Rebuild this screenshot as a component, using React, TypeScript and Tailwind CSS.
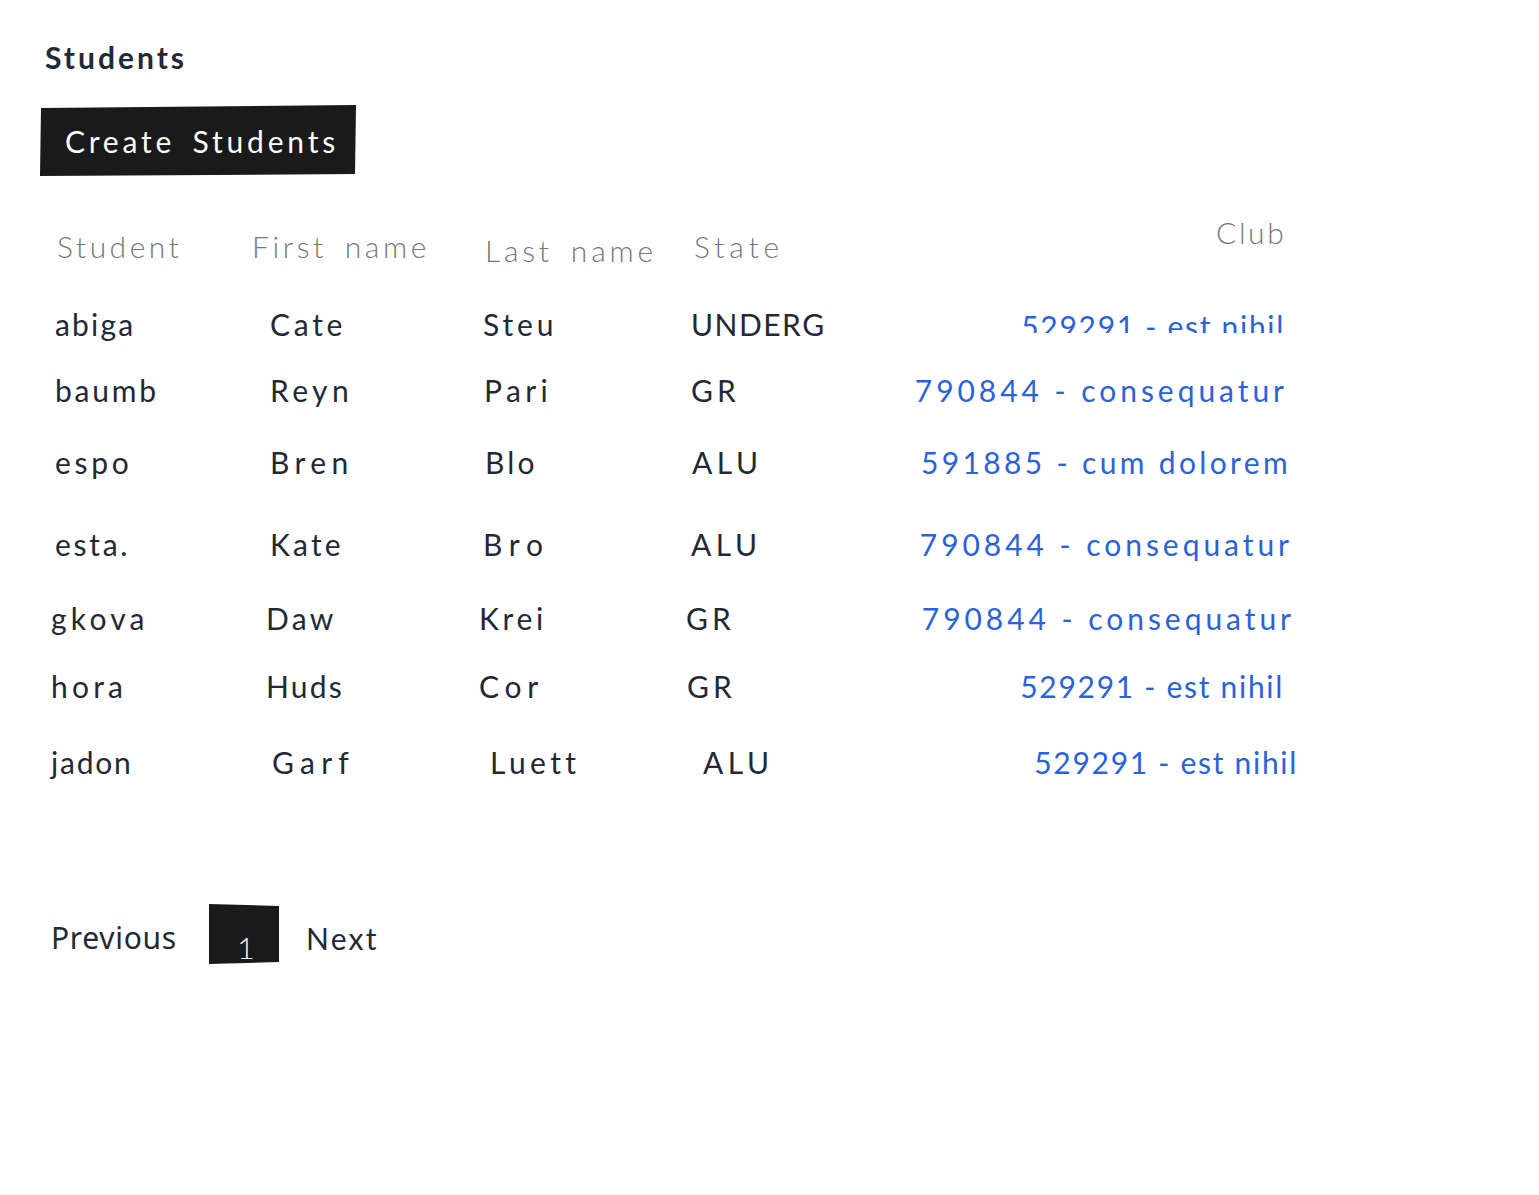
const hand = "font-['Lato','Liberation_Sans',sans-serif] font-normal text-[30px] leading-[40px] tracking-[2.2px] whitespace-nowrap";
const link = "text-right text-[#2a62de]";

export default function App() {
  return (
    <div className={"min-h-[1195px] bg-white text-[#1f2937] " + hand}>
      <div className="pt-[37px] pl-[45px] h-[78px] font-bold tracking-[3px]">Students</div>
      <div className="mt-[27px] ml-[40px] w-[316px] h-[71px] flex items-center pl-[25px] bg-[#1a1a1a] text-white tracking-[3.8px] [word-spacing:6px] [clip-path:polygon(1px_3px,100%_0,315px_69px,0_100%)]">Create Students</div>

      <div className="mt-[50px] h-[40px] flex items-center pl-[57px] text-[#777777] [word-spacing:6px] font-light">
        <div className="w-[195px] tracking-[3.5px]">Student</div>
        <div className="w-[233px] tracking-[3.6px]">First name</div>
        <div className="w-[209px] pt-[8px] tracking-[3.8px]">Last name</div>
        <div className="w-[522px] tracking-[4.8px]">State</div>
        <div className="w-[68px] pb-[28px] text-right tracking-[2.6px]">Club</div>
      </div>

      <div className="mt-[38px] h-[40px] flex items-center pl-[55px]">
        <div className="w-[215px] tracking-[2.2px]">abiga</div>
        <div className="w-[213px] tracking-[3.7px]">Cate</div>
        <div className="w-[208px] tracking-[3.9px]">Steu</div>
        <div className="w-[137px] tracking-[1.5px]">UNDERG</div>
        <div className={"w-[457px] self-start h-[29px] pt-[2px] overflow-hidden tracking-[1.7px] " + link}>529291 - est nihil</div>
      </div>

      <div className="mt-[26px] h-[40px] flex items-center pl-[55px]">
        <div className="w-[215px] tracking-[2.8px]">baumb</div>
        <div className="w-[214px] tracking-[4.4px]">Reyn</div>
        <div className="w-[207px] tracking-[4.4px]">Pari</div>
        <div className="w-[137px] tracking-[4.2px]">GR</div>
        <div className={"w-[460px] tracking-[3.95px] " + link}>790844 - consequatur</div>
      </div>

      <div className="mt-[32px] h-[40px] flex items-center pl-[55px]">
        <div className="w-[215px] tracking-[3.7px]">espo</div>
        <div className="w-[215px] tracking-[5.4px]">Bren</div>
        <div className="w-[207px] tracking-[3.2px]">Blo</div>
        <div className="w-[137px] tracking-[4.5px]">ALU</div>
        <div className={"w-[462px] tracking-[3.35px] " + link}>591885 - cum dolorem</div>
      </div>

      <div className="mt-[42px] h-[40px] flex items-center pl-[55px]">
        <div className="w-[215px] tracking-[2.7px]">esta.</div>
        <div className="w-[213px] tracking-[3.2px]">Kate</div>
        <div className="w-[208px] tracking-[6.8px]">Bro</div>
        <div className="w-[137px] tracking-[4.5px]">ALU</div>
        <div className={"w-[465px] tracking-[3.95px] " + link}>790844 - consequatur</div>
      </div>

      <div className="mt-[34px] h-[40px] flex items-center pl-[51px]">
        <div className="w-[215px] tracking-[4.2px]">gkova</div>
        <div className="w-[213px] tracking-[3.2px]">Daw</div>
        <div className="w-[207px] tracking-[3.7px]">Krei</div>
        <div className="w-[137px] tracking-[4.2px]">GR</div>
        <div className={"w-[472px] tracking-[3.95px] " + link}>790844 - consequatur</div>
      </div>

      <div className="mt-[28px] h-[40px] flex items-center pl-[51px]">
        <div className="w-[215px] tracking-[4.2px]">hora</div>
        <div className="w-[213px] tracking-[2.2px]">Huds</div>
        <div className="w-[208px] tracking-[5.8px]">Cor</div>
        <div className="w-[137px] tracking-[4.2px]">GR</div>
        <div className={"w-[460px] tracking-[1.7px] " + link}>529291 - est nihil</div>
      </div>

      <div className="mt-[36px] h-[40px] flex items-center pl-[51px]">
        <div className="w-[221px] tracking-[1.8px]">jadon</div>
        <div className="w-[218px] tracking-[6.2px]">Garf</div>
        <div className="w-[213px] tracking-[4.4px]">Luett</div>
        <div className="w-[137px] tracking-[4.5px]">ALU</div>
        <div className={"w-[458px] tracking-[1.7px] " + link}>529291 - est nihil</div>
      </div>

      <div className="mt-[122px] ml-[51px] h-[60px] flex items-center">
        <div className="w-[158px] pt-[8px] font-['Noto_Sans',sans-serif] font-normal tracking-[0.7px]">Previous</div>
        <div className="w-[70px] h-[60px] pl-[6px] bg-[#1a1a1a] text-white font-light flex items-end justify-center pb-[2px] leading-[30px] [clip-path:polygon(0_0,100%_2px,100%_58px,0_100%)]">1</div>
        <div className="ml-[27px] pt-[8px]">Next</div>
      </div>
    </div>
  );
}
